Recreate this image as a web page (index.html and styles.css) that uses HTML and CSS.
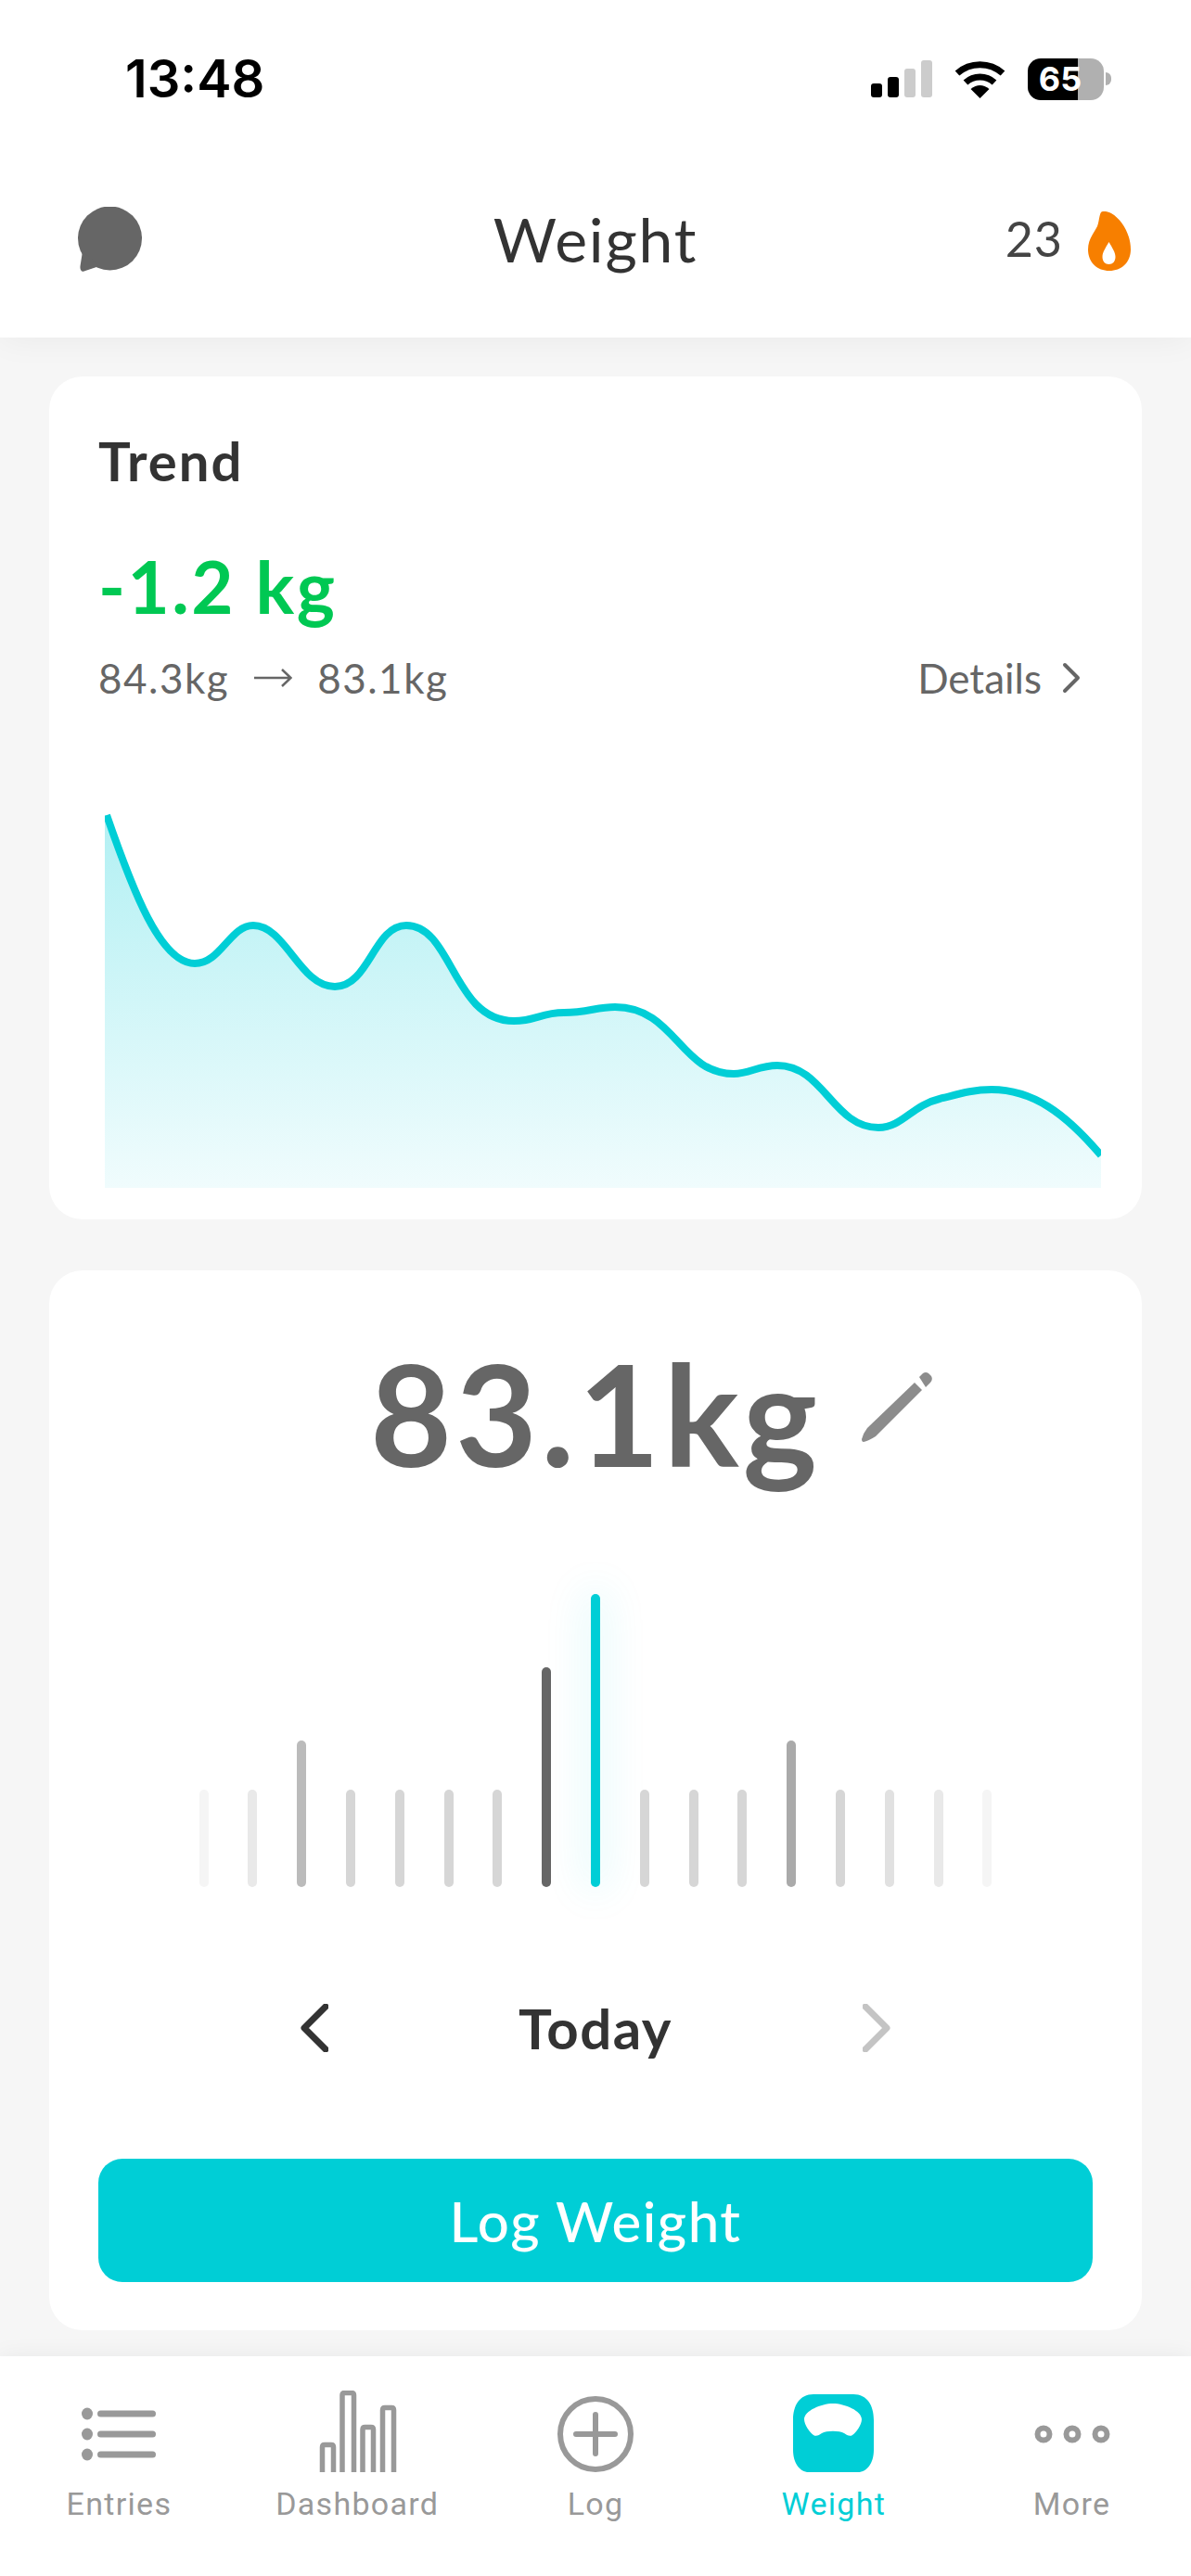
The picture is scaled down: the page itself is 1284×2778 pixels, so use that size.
FILE: index.html
```html
<!DOCTYPE html>
<html lang="en">
<head>
    <meta charset="UTF-8">
    <meta name="viewport" content="width=device-width, initial-scale=1.0">
    <title>Weight</title>
    <link rel="stylesheet" href="styles.css">
</head>
<body>
    <header class="header">
        <div class="status">
            <span class="time">13:48</span>
            <div class="status-icons">
                <div class="signal">
                    <i class="bar bar-1"></i>
                    <i class="bar bar-2"></i>
                    <i class="bar bar-3 off"></i>
                    <i class="bar bar-4 off"></i>
                </div>
                <svg class="wifi" width="55" height="41" viewBox="0 0 55 41">
                    <path d="M3 14 A37 37 0 0 1 52 14" fill="none" stroke="#000" stroke-width="7"/>
                    <path d="M12 24 A23 23 0 0 1 43 24" fill="none" stroke="#000" stroke-width="7"/>
                    <path d="M27.5 41 L17.500 31 Q27.500 23 37.500 31 Z" fill="#000"/>
                </svg>
                <div class="battery">
                    <div class="battery-body"><span>65</span></div>
                    <i class="battery-nub"></i>
                </div>
            </div>
        </div>
        <div class="topbar">
            <svg class="chat" width="70" height="71" viewBox="0 0 70 71">
                <circle cx="35.500" cy="34" r="34.500" fill="#666"/>
                <path d="M6 48 L3.500 64 C3 69 6 71 9 69 L24 64 Z" fill="#666"/>
            </svg>
            <h1 class="title">Weight</h1>
            <div class="streak">
                <span>23</span>
                <svg class="flame" width="46" height="64" viewBox="0 0 46 64">
                    <path fill="#f77f00" fill-rule="evenodd" d="M14 1 C16 -1 21 0 25 2 C37 9 46 25 46 41 C46 55 36 64 23 64 C10 64 0 55 0 41 C0 30 6 24 10 16 C12 11 12 4 14 1 Z M22.500 33 C26 39 29.500 44 29.500 49 C29.500 54 26.500 57 22.500 57 C18.500 57 15.500 54 15.500 49 C15.500 44 19 39 22.500 33 Z"/>
                </svg>
            </div>
        </div>
    </header>

    <main class="content">
        <section class="card trend">
            <div class="trend-head">
                <h2 class="trend-title">Trend</h2>
                <div class="delta">-1.2 kg</div>
                <div class="meta">
                    <div class="range">
                        <span>84.3kg</span>
                        <svg width="41" height="22" viewBox="0 0 41 22">
                            <path d="M0 11 H39 M30 2 L39.500 11 L30 20" fill="none" stroke="#666" stroke-width="2.500"/>
                        </svg>
                        <span>83.1kg</span>
                    </div>
                    <div class="details">
                        <span>Details</span>
                        <svg width="20" height="34" viewBox="0 0 20 34">
                            <path d="M3 3 L17 17 L3 31" fill="none" stroke="#666" stroke-width="4" stroke-linecap="round" stroke-linejoin="round"/>
                        </svg>
                    </div>
                </div>
            </div>
            <svg class="chart" width="1074" height="411" viewBox="0 0 1074 411">
                <defs>
                    <linearGradient id="chartFill" x1="0" y1="0" x2="0" y2="1">
                        <stop offset="0" stop-color="#b2f0f3"/>
                        <stop offset="1" stop-color="#f0fcfd"/>
                    </linearGradient>
                </defs>
                <path fill="url(#chartFill)" d="M0 9 L2 9 C30 90 60 169 97 169 C125 169 135 128 160 128 C195 128 210 194 248 194 C285 194 290 128 325 128 C375 128 375 231 441 231 C465 231 470 222 495 222 C520 222 530 216 550 216 C615 216 620 288 678 288 C695 288 705 279 725 279 C775 279 785 346 834 346 C860 346 870 322 900 315 C920 310 935 305 956 305 C1000 305 1035 330 1074 376 V411 H0 Z"/>
                <path fill="none" stroke="#00ced6" stroke-width="8" d="M2 9 C30 90 60 169 97 169 C125 169 135 128 160 128 C195 128 210 194 248 194 C285 194 290 128 325 128 C375 128 375 231 441 231 C465 231 470 222 495 222 C520 222 530 216 550 216 C615 216 620 288 678 288 C695 288 705 279 725 279 C775 279 785 346 834 346 C860 346 870 322 900 315 C920 310 935 305 956 305 C1000 305 1035 330 1074 376"/>
            </svg>
        </section>

        <section class="card logger">
            <div class="reading">
                <span class="reading-value">83.1kg</span>
                <svg class="pencil" width="76" height="76" viewBox="0 0 76 76">
                    <path fill="#8c8c8c" d="M6 60 L57 11 L65 19 L15 69 Q7 74 2 75 Q0 75 0 72 Q2 65 6 60 Z"/>
                    <path fill="#8c8c8c" d="M62 5 L66 1 Q69 -1 72 1 L75 4 Q77 8 74 11 L69 16 Z"/>
                </svg>
            </div>
            <div class="ticks">
                <i class="tick shade-1"></i>
                <i class="tick shade-2"></i>
                <i class="tick mid shade-5"></i>
                <i class="tick shade-3"></i>
                <i class="tick shade-3"></i>
                <i class="tick shade-3"></i>
                <i class="tick shade-3"></i>
                <i class="tick tall"></i>
                <i class="tick current"></i>
                <i class="tick shade-3"></i>
                <i class="tick shade-3"></i>
                <i class="tick shade-3"></i>
                <i class="tick mid shade-6"></i>
                <i class="tick shade-3"></i>
                <i class="tick shade-4"></i>
                <i class="tick shade-2"></i>
                <i class="tick shade-1"></i>
            </div>
            <div class="day-nav">
                <svg width="30" height="52" viewBox="0 0 30 52">
                    <path d="M27 3 L4 26 L27 49" fill="none" stroke="#333" stroke-width="7" stroke-linecap="round" stroke-linejoin="round"/>
                </svg>
                <span class="day-label">Today</span>
                <svg width="30" height="52" viewBox="0 0 30 52">
                    <path d="M3 3 L26 26 L3 49" fill="none" stroke="#c4c4c4" stroke-width="7" stroke-linecap="round" stroke-linejoin="round"/>
                </svg>
            </div>
            <button class="log-btn">Log Weight</button>
        </section>
    </main>

    <nav class="tabs">
        <div class="tab">
            <svg width="88" height="88" viewBox="0 0 88 88">
                <g fill="#999">
                    <ellipse cx="10" cy="25" rx="6" ry="6.500"/>
                    <ellipse cx="10" cy="47" rx="6" ry="6.500"/>
                    <ellipse cx="10" cy="69" rx="6" ry="6.500"/>
                    <rect x="21" y="21.500" width="63" height="7" rx="3.500"/>
                    <rect x="21" y="43.500" width="63" height="7" rx="3.500"/>
                    <rect x="21" y="65.500" width="63" height="7" rx="3.500"/>
                </g>
            </svg>
            <span class="tab-label">Entries</span>
        </div>
        <div class="tab">
            <svg width="88" height="88" viewBox="0 0 88 88">
                <g fill="none" stroke="#999" stroke-width="5.500">
                    <path d="M6.500 88 V61 Q6.500 58.500 9 58.500 H16 Q18.500 58.500 18.500 61 V88"/>
                    <path d="M28 88 V5 Q28 2.500 30.500 2.500 H38 Q40.500 2.500 40.500 5 V88"/>
                    <path d="M50 88 V42 Q50 39.500 52.500 39.500 H59 Q61.500 39.500 61.500 42 V88"/>
                    <path d="M71.500 88 V21 Q71.500 18.500 74 18.500 H81 Q83.500 18.500 83.500 21 V88"/>
                </g>
            </svg>
            <span class="tab-label">Dashboard</span>
        </div>
        <div class="tab">
            <svg width="88" height="88" viewBox="0 0 88 88">
                <circle cx="44" cy="47" r="38" fill="none" stroke="#999" stroke-width="6"/>
                <path d="M44 26 V68 M23 47 H65" fill="none" stroke="#999" stroke-width="6" stroke-linecap="round"/>
            </svg>
            <span class="tab-label">Log</span>
        </div>
        <div class="tab active">
            <svg width="87" height="88" viewBox="0 0 87 88">
                <path fill="#00ced6" fill-rule="evenodd" transform="translate(0 4)" d="M22 0 H65 C80 0 87 12 87 28 V60 C87 74 80 84 70 84 H17 C7 84 0 74 0 60 V28 C0 12 7 0 22 0 Z M12 27 C12 18 30 10 43 10 C56 10 74 18 74 27 C74 33 68 41 64 44 C61 46 58 44 55 42 C50 39 36 39 31 42 C28 44 25 46 22 44 C18 41 12 33 12 27 Z"/>
            </svg>
            <span class="tab-label">Weight</span>
        </div>
        <div class="tab">
            <svg width="88" height="88" viewBox="0 0 88 88">
                <g fill="none" stroke="#999" stroke-width="6">
                    <circle cx="13" cy="47" r="6.500"/>
                    <circle cx="44" cy="47" r="6.500"/>
                    <circle cx="75" cy="47" r="6.500"/>
                </g>
            </svg>
            <span class="tab-label">More</span>
        </div>
    </nav>
</body>
</html>
```

FILE: styles.css
```css
* {
    box-sizing: border-box;
}
body {
    font-family: 'Lato', sans-serif;
    background-color: #f6f6f6;
    margin: 0;
    width: 1284px;
    height: 2778px;
    display: flex;
    flex-direction: column;
    overflow: hidden;
}
i {
    display: block;
}

/* header */
.header {
    background-color: #fff;
    height: 364px;
    box-shadow: 0 0 36px rgba(0, 0, 0, 0.06);
    position: relative;
}
.status {
    height: 170px;
    padding: 0 86px 0 135px;
    display: flex;
    justify-content: space-between;
    align-items: center;
}
.time {
    font-family: 'Inter', sans-serif;
    font-size: 56px;
    font-weight: 600;
    color: #000;
}
.status-icons {
    display: flex;
    align-items: center;
    gap: 24px;
}
.signal {
    display: flex;
    align-items: flex-end;
    gap: 6px;
    height: 40px;
}
.bar {
    width: 12px;
    background-color: #000;
    border-radius: 3px;
}
.bar.off {
    background-color: #ccc;
}
.bar-1 { height: 15px; }
.bar-2 { height: 22px; }
.bar-3 { height: 31px; }
.bar-4 { height: 40px; }
.battery {
    display: flex;
    align-items: center;
    gap: 2px;
}
.battery-body {
    width: 82px;
    height: 45px;
    border-radius: 14px;
    background: linear-gradient(to right, #000 54px, #b0b0b0 54px);
    display: flex;
    align-items: center;
    justify-content: center;
}
.battery-body span {
    font-family: 'Inter', sans-serif;
    font-size: 36px;
    font-weight: 700;
    color: #fff;
    margin-right: 12px;
}
.battery-nub {
    width: 6px;
    height: 14px;
    background-color: #b0b0b0;
    border-radius: 0 6px 6px 0;
}
.topbar {
    height: 178px;
    padding: 0 65px 4px 83px;
    display: flex;
    justify-content: space-between;
    align-items: center;
    position: relative;
}
.chat {
    margin-top: 3px;
}
.title {
    position: absolute;
    left: 0;
    right: 0;
    text-align: center;
    margin: 0;
    font-size: 66px;
    font-weight: 400;
    letter-spacing: 1.800px;
    color: #333;
}
.streak {
    display: flex;
    align-items: center;
    gap: 27px;
    font-size: 52px;
    letter-spacing: 1px;
    color: #444;
}
.flame {
    margin-top: 6px;
}

/* cards */
.content {
    flex: 1;
    padding: 42px 53px 0;
    display: flex;
    flex-direction: column;
    gap: 55px;
}
.card {
    background-color: #fff;
    border-radius: 36px;
}
.trend {
    height: 909px;
    padding-top: 60px;
}
.trend-head {
    padding: 0 66px 0 53px;
}
.trend-title {
    margin: 0;
    font-size: 58px;
    line-height: 62px;
    font-weight: 700;
    letter-spacing: 2px;
    color: #333;
}
.delta {
    margin-top: 59px;
    font-size: 78px;
    line-height: 90px;
    font-weight: 700;
    letter-spacing: 2.500px;
    color: #00c853;
}
.meta {
    margin-top: 29px;
    height: 50px;
    display: flex;
    justify-content: space-between;
    align-items: center;
    font-size: 44px;
    color: #666;
}
.range {
    display: flex;
    align-items: center;
    gap: 27px;
    letter-spacing: 1.500px;
}
.details {
    display: flex;
    align-items: center;
    gap: 22px;
}
.chart {
    display: block;
    margin: 114px 0 0 60px;
}
.logger {
    height: 1143px;
    padding: 62px 53px 0;
}
.reading {
    height: 180px;
    display: grid;
    grid-template-columns: 1fr auto 1fr;
    align-items: center;
}
.reading-value {
    grid-column: 2;
    font-size: 152px;
    font-weight: 700;
    letter-spacing: 4px;
    color: #666;
}
.pencil {
    margin-left: 44px;
    margin-top: -10px;
}
.ticks {
    margin-top: 107px;
    height: 316px;
    display: flex;
    justify-content: center;
    align-items: flex-end;
    gap: 42.800px;
}
.tick {
    width: 10px;
    height: 105px;
    border-radius: 5px;
}
.mid { height: 158px; }
.shade-1 { background-color: #f5f5f5; }
.shade-2 { background-color: #e9e9e9; }
.shade-3 { background-color: #d6d6d6; }
.shade-4 { background-color: #e1e1e1; }
.shade-5 { background-color: #bbb; }
.shade-6 { background-color: #aaa; }
.tall {
    height: 237px;
    background-color: #666;
}
.current {
    height: 316px;
    background-color: #00ced6;
    box-shadow: 0 0 44px 6px rgba(0, 206, 214, 0.13);
}
.day-nav {
    margin: 122px auto 0;
    width: 636px;
    height: 60px;
    display: flex;
    justify-content: space-between;
    align-items: center;
}
.day-label {
    font-size: 60px;
    font-weight: 700;
    letter-spacing: 1.500px;
    color: #333;
}
.log-btn {
    display: block;
    margin-top: 111px;
    width: 100%;
    height: 133px;
    background-color: #00ced6;
    color: #fff;
    border: none;
    border-radius: 26px;
    font-family: inherit;
    font-size: 60px;
    font-weight: 500;
    letter-spacing: 1.500px;
}

/* bottom tabs */
.tabs {
    height: 237px;
    padding-top: 37px;
    background-color: #fff;
    box-shadow: 0 0 24px rgba(0, 0, 0, 0.06);
    position: relative;
    display: grid;
    grid-template-columns: repeat(5, 1fr);
}
.tab {
    display: flex;
    flex-direction: column;
    align-items: center;
}
.tab-label {
    margin-top: 14px;
    font-family: 'Roboto', sans-serif;
    font-size: 34px;
    line-height: 40px;
    letter-spacing: 1.300px;
    color: #999;
}
.tab.active .tab-label {
    color: #00ced6;
}
```
